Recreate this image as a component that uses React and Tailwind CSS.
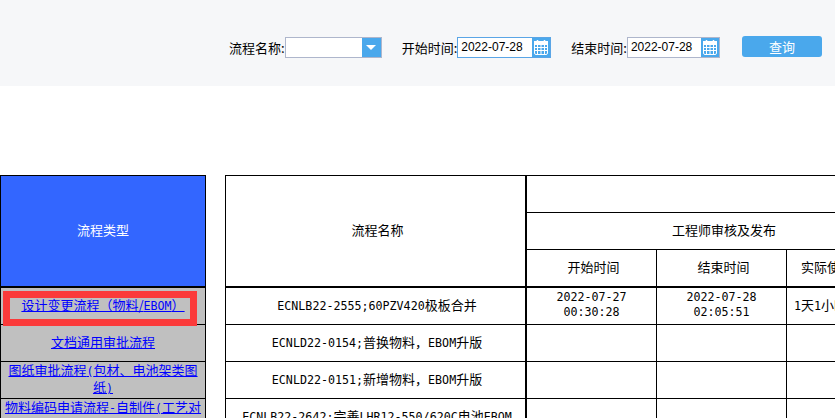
const T = ({ children }) => <span className="font-['DejaVu_Sans_Mono',monospace] text-[11.67px]">{children}</span>;

const CalendarIcon = () => (
  <svg width="16" height="17" viewBox="0 0 16 17" fill="none" stroke="#fff" strokeWidth="1">
    <rect x="1.5" y="2.5" width="13" height="13" rx="1.5" />
    <rect x="1.5" y="2.5" width="13" height="3" fill="#fff" />
    <path d="M1.5 8.5h13M1.5 11.5h13M4.5 5.5v10M8 5.5v10M11.5 5.5v10" />
    <path d="M4.5 1v2M11.5 1v2" strokeWidth="1.5" />
  </svg>
);

const DateField = ({ label, active, width }) => (
  <div className="flex items-center">
    <span className="text-[13px] text-black">{label}:</span>
    <div className={`flex h-[21px] border ${active ? "border-[#5aa5e6]" : "border-[#aeb6cc]"}`}>
      <div className={`${width} bg-white pl-[3px] text-[12px] leading-[19px] text-black font-['Liberation_Sans',sans-serif]`}>2022-07-28</div>
      <div className="w-[18px] bg-[#4aa8ec] flex items-center justify-center"><CalendarIcon /></div>
    </div>
  </div>
);

const sideRows = [
  <>设计变更流程（物料/<T>EBOM</T>）</>,
  "文档通用审批流程",
  <>图纸审批流程<T>(</T>包材、电池架类图纸<T>)</T></>,
  <>物料编码申请流程<T>-</T>自制件<T>(</T>工艺对接<T>)</T></>,
];

const rows = [
  { name: <><T>ECNLB22-2555;60PZV420</T>极板合并</>, start: ["2022-07-27", "00:30:28"], end: ["2022-07-28", "02:05:51"], real: <><T>1</T>天<T>1</T>小时</> },
  { name: <><T>ECNLD22-0154;</T>普换物料，<T>EBOM</T>升版</> },
  { name: <><T>ECNLD22-0151;</T>新增物料，<T>EBOM</T>升版</> },
  { name: <><T>ECNLB22-2642;</T>完善<T>LHR12-550/620C</T>电池<T>EBOM</T></> },
];

export default function App() {
  return (
    <div className="w-[835px] h-[418px] overflow-hidden bg-white font-['Noto_Sans_CJK_SC',sans-serif]">
      {/* query bar */}
      <div className="h-[86px] bg-[#f6f7f9] flex items-center pl-[229px] pt-[9px]">
        <div className="flex items-center">
          <span className="text-[13px] text-black">流程名称:</span>
          <div className="flex h-[21px] border border-[#aeb6cc]">
            <div className="w-[76px] bg-white" />
            <div className="w-[19px] bg-[#4aa8ec] flex items-center justify-center">
              <div className="border-x-[5px] border-x-transparent border-t-[5px] border-t-white" />
            </div>
          </div>
        </div>
        <div className="ml-5"><DateField label="开始时间" width="w-[74px]" active /></div>
        <div className="ml-5"><DateField label="结束时间" width="w-[73px]" /></div>
        <button className="ml-[22px] mb-[2px] w-[80px] h-[21px] rounded-[3px] bg-[#4aa8ec] text-white text-[13px] leading-[21px]">查询</button>
      </div>

      {/* report tables */}
      <div className="mt-[89px] flex items-start gap-[19px] text-[13px] text-black">
        <div className="relative w-[206px] shrink-0 border border-black">
          <div className="h-[112px] pb-[2px] bg-[#3366ff] border-b-2 border-black text-white flex items-center justify-center">流程类型</div>
          {sideRows.map((r, i) => (
            <div key={i} className="h-[37px] pb-[2px] bg-[#c0c0c0] border-b border-black text-center leading-[16px] flex items-center justify-center">
              <a href="#" className="text-[#0000ff] underline">{r}</a>
            </div>
          ))}
          <div className="absolute left-[2px] top-[115px] w-[194px] h-[35px] border-[7px] border-[#fb3a3a]" />
        </div>

        <div className="w-[700px] shrink-0 border border-black border-r-0">
          <div className="flex h-[112px] border-b-2 border-black">
            <div className="w-[301px] shrink-0 pb-[2px] pl-[4px] border-r-2 border-black flex items-center justify-center">流程名称</div>
            <div className="flex-1 flex flex-col">
              <div className="h-[37px] border-b border-black" />
              <div className="h-[37px] pb-[2px] border-b border-black flex items-center pl-[145px]">工程师审核及发布</div>
              <div className="flex-1 flex">
                <div className="w-[130px] pb-[2px] pl-[4px] border-r border-black flex items-center justify-center">开始时间</div>
                <div className="w-[130px] pb-[2px] pl-[4px] border-r border-black flex items-center justify-center">结束时间</div>
                <div className="flex-1 pl-[14px] pb-[2px] flex items-center">实际使用时间</div>
              </div>
            </div>
          </div>
          {rows.map((r, i) => (
            <div key={i} className="flex h-[37px] border-b border-black">
              <div className="w-[301px] shrink-0 pb-[2px] pl-[3px] border-r-2 border-black flex items-center justify-center whitespace-nowrap overflow-hidden">
                <span>{r.name}</span>
              </div>
              <div className="w-[130px] shrink-0 pb-[2px] border-r border-black flex flex-col items-center justify-center leading-[15px] text-center"><T>{r.start?.[0]}</T><T>{r.start?.[1]}</T></div>
              <div className="w-[130px] shrink-0 pb-[2px] border-r border-black flex flex-col items-center justify-center leading-[15px] text-center"><T>{r.end?.[0]}</T><T>{r.end?.[1]}</T></div>
              <div className="flex-1 flex items-center pl-[7px] pb-[2px] whitespace-nowrap"><span>{r.real}</span></div>
            </div>
          ))}
        </div>
      </div>
    </div>
  );
}
